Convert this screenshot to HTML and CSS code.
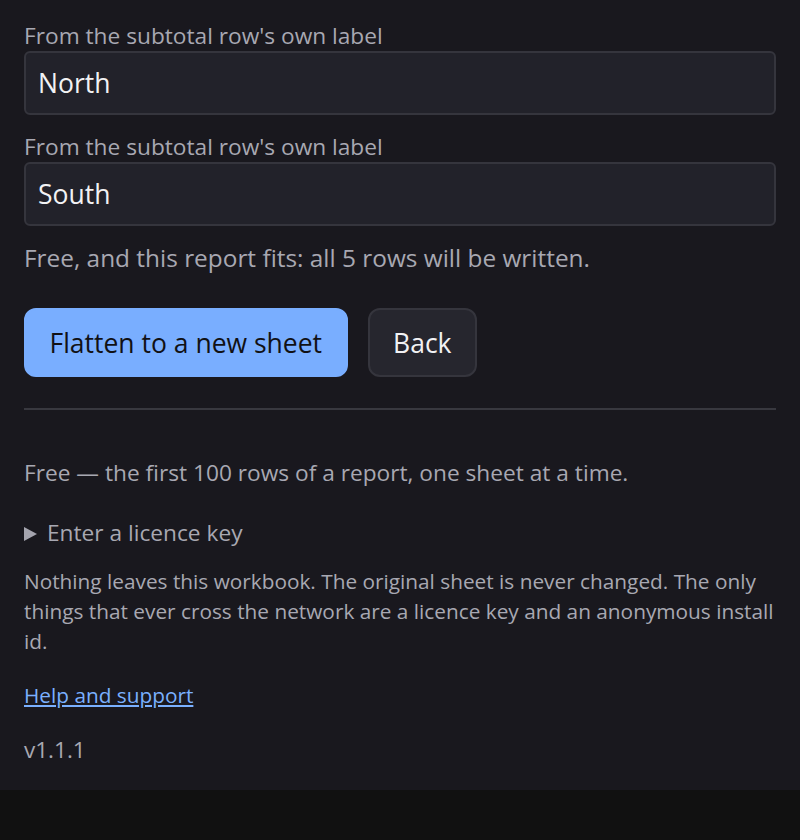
FILE: index.html
```html
<!DOCTYPE html>
<html lang="en">
<head>
<meta charset="utf-8">
<title>Flatten report</title>
<link rel="stylesheet" href="styles.css">
</head>
<body>
<main class="panel">
  <div class="field">
    <label class="field-label" for="f1">From the subtotal row's own label</label>
    <input class="field-input" id="f1" type="text" value="North">
  </div>
  <div class="field">
    <label class="field-label" for="f2">From the subtotal row's own label</label>
    <input class="field-input" id="f2" type="text" value="South">
  </div>
  <p class="status">Free, and this report fits: all 5 rows will be written.</p>
  <div class="actions">
    <button class="btn btn-primary" type="button">Flatten to a new sheet</button>
    <button class="btn btn-secondary" type="button">Back</button>
  </div>
  <hr class="divider">
  <p class="tier">Free — the first 100 rows of a report, one sheet at a time.</p>
  <details class="licence">
    <summary>Enter a licence key</summary>
  </details>
  <p class="privacy">Nothing leaves this workbook. The original sheet is never changed. The only things that ever cross the network are a licence key and an anonymous install id.</p>
  <p class="help"><a href="#">Help and support</a></p>
  <p class="version">v1.1.1</p>
</main>
</body>
</html>
```
FILE: styles.css
```css
html, body {
  margin: 0;
  padding: 0;
  background: #111111;
}
body {
  font-family: "Open Sans", "Noto Sans", "Liberation Sans", sans-serif;
  color: #a8a8b2;
}
.panel {
  background: #19181e;
  padding: 21px 24px 0;
  height: 769px;
}
.field {
  display: flex;
  flex-direction: column;
  margin-bottom: 17px;
}
.field-label {
  font-size: 22.7px;
  line-height: 30px;
  color: #a8a8b2;
}
.field-input {
  box-sizing: border-box;
  height: 64px;
  width: 100%;
  background: #22222a;
  border: 2px solid #35353d;
  border-radius: 6px;
  color: #f2f2f4;
  font-family: inherit;
  font-size: 26.5px;
  padding: 0 12px;
  outline: none;
}
.status {
  font-size: 24.4px;
  line-height: 30px;
  margin: 0 0 35px;
  color: #a8a8b2;
}
.actions {
  display: flex;
  gap: 20px;
}
.btn {
  height: 69px;
  border-radius: 12px;
  font-family: inherit;
  font-size: 26.5px;
  padding: 0 23.5px;
}
.btn-primary {
  background: #79aeff;
  border: 2px solid #79aeff;
  color: #111114;
}
.btn-secondary {
  background: #26262e;
  border: 2px solid #35353d;
  color: #f2f2f4;
}
.divider {
  border: 0;
  border-top: 2px solid #38383f;
  margin: 31px 0 48px;
}
.tier {
  font-size: 22.7px;
  line-height: 30px;
  margin: 0 0 30px;
}
.licence summary {
  font-size: 22.7px;
  line-height: 30px;
  cursor: pointer;
  list-style: none;
  display: flex;
  align-items: center;
}
.licence summary::-webkit-details-marker {
  display: none;
}
.licence summary::before {
  content: "";
  display: inline-block;
  width: 0;
  height: 0;
  border-left: 13px solid #a4a4ae;
  border-top: 7px solid transparent;
  border-bottom: 7px solid transparent;
  margin-right: 10px;
  margin-top: 1px;
}
.privacy {
  font-size: 20.8px;
  line-height: 30px;
  margin: 18px 0 24px;
}
.help {
  font-size: 20.8px;
  line-height: 30px;
  margin: 0 0 25px;
}
.help a {
  color: #7ab0ff;
}
.version {
  font-size: 22.5px;
  line-height: 30px;
  margin: 0;
}
```
